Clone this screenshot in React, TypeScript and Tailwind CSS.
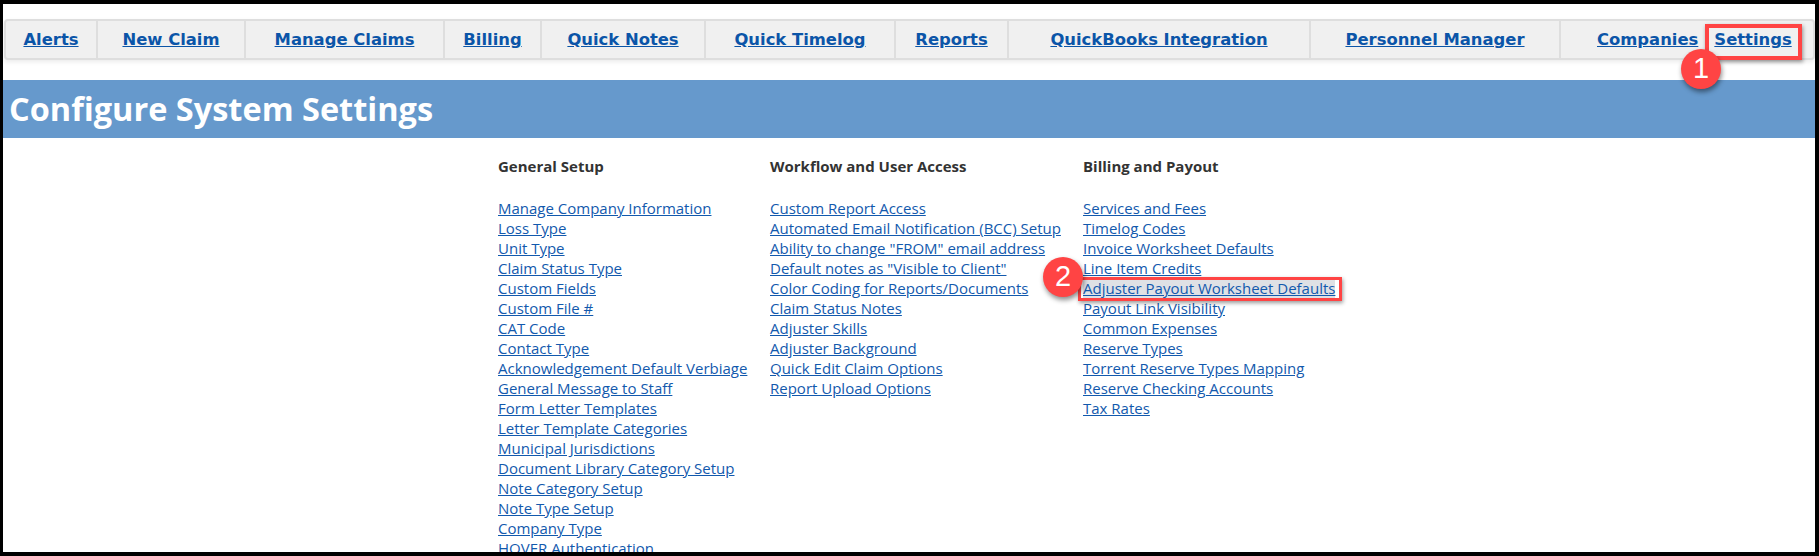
import React from 'react';

const navItems = [
  { label: 'Alerts', w: 'w-[92px]' },
  { label: 'New Claim', w: 'w-[148px]' },
  { label: 'Manage Claims', w: 'w-[199px]' },
  { label: 'Billing', w: 'w-[97px]' },
  { label: 'Quick Notes', w: 'w-[164px]' },
  { label: 'Quick Timelog', w: 'w-[190px]' },
  { label: 'Reports', w: 'w-[113px]' },
  { label: 'QuickBooks Integration', w: 'w-[302px]' },
  { label: 'Personnel Manager', w: 'w-[250px]' },
];

const columns = [
  {
    title: 'General Setup',
    w: 'w-[272px]',
    links: [
      'Manage Company Information', 'Loss Type', 'Unit Type', 'Claim Status Type', 'Custom Fields',
      'Custom File #', 'CAT Code', 'Contact Type', 'Acknowledgement Default Verbiage',
      'General Message to Staff', 'Form Letter Templates', 'Letter Template Categories',
      'Municipal Jurisdictions', 'Document Library Category Setup', 'Note Category Setup',
      'Note Type Setup', 'Company Type', 'HOVER Authentication',
    ],
  },
  {
    title: 'Workflow and User Access',
    w: 'w-[313px]',
    links: [
      'Custom Report Access', 'Automated Email Notification (BCC) Setup',
      'Ability to change "FROM" email address', 'Default notes as "Visible to Client"',
      'Color Coding for Reports/Documents', 'Claim Status Notes', 'Adjuster Skills',
      'Adjuster Background', 'Quick Edit Claim Options', 'Report Upload Options',
    ],
  },
  {
    title: 'Billing and Payout',
    w: 'w-[300px]',
    links: [
      'Services and Fees', 'Timelog Codes', 'Invoice Worksheet Defaults', 'Line Item Credits',
      'Adjuster Payout Worksheet Defaults', 'Payout Link Visibility', 'Common Expenses', 'Reserve Types',
      'Torrent Reserve Types Mapping', 'Reserve Checking Accounts', 'Tax Rates',
    ],
  },
];

const Badge = ({ n, className }: { n: string; className: string }) => (
  <div className={`absolute w-[40px] h-[40px] rounded-full bg-[#ff4444] text-white flex items-center justify-center text-[29px] font-['Liberation_Sans',sans-serif] shadow-[1px_3px_5px_rgba(0,0,0,0.45)] ${className}`}>
    {n}
  </div>
);

const App: React.FC = () => {
  return (
    <div className="relative h-[556px] overflow-hidden bg-white border-solid border-black border-t-[4px] border-l-[3px] border-r-[4px] border-b-[4px] font-['Open_Sans',sans-serif]">
      {/* Top nav */}
      <div className="pt-[15px] pl-[1px]">
        <div className="flex h-[41px] items-stretch rounded-[4px] border-2 border-[#dedede] bg-[#f0f0f0] font-['DejaVu_Sans',sans-serif] text-[16.4px] font-bold text-[#0b55a8] shadow-[0_2px_4px_rgba(0,0,0,0.08)]">
          {navItems.map((item) => (
            <div key={item.label} className={`${item.w} shrink-0 flex items-center justify-center pt-[2px] border-r-2 border-[#dedede]`}>
              <a className="underline">{item.label}</a>
            </div>
          ))}
          <div className="flex items-center pl-[36px] pt-[2px] gap-[16px]">
            <a className="underline">Companies</a>
            <a className="underline">Settings</a>
          </div>
        </div>
      </div>

      {/* Title bar */}
      <div className="mt-[20px] h-[58px] bg-[#6699cc] pl-[6px] pt-[1px] flex items-center">
        <h1 className="text-[32.5px] font-bold text-white">Configure System Settings</h1>
      </div>

      {/* Settings columns */}
      <div className="flex pl-[495px] pt-[18px]">
        {columns.map((col) => (
          <div key={col.title} className={col.w}>
            <h2 className="text-[15px] font-bold leading-[20px] text-[#333333] mb-[22px]">{col.title}</h2>
            {col.links.map((link) => (
              <div key={link} className="leading-[20px] text-[15px] text-[#1259ad] whitespace-nowrap">
                <a className={link === 'Adjuster Payout Worksheet Defaults' ? 'underline bg-[#dfe1e5]' : 'underline'}>{link}</a>
              </div>
            ))}
          </div>
        ))}
      </div>

      {/* Callouts */}
      <div className="absolute left-[1702px] top-[20px] w-[97px] h-[36px] border-[4px] border-[#ff4444] shadow-[1px_2px_4px_rgba(0,0,0,0.4)]" />
      <div className="absolute left-[1075px] top-[273px] w-[264px] h-[24px] border-[3px] border-[#ff4444] shadow-[1px_2px_4px_rgba(0,0,0,0.4)]" />
      <Badge n="1" className="left-[1678px] top-[45px]" />
      <Badge n="2" className="left-[1040px] top-[253px]" />
    </div>
  );
};

export default App;
